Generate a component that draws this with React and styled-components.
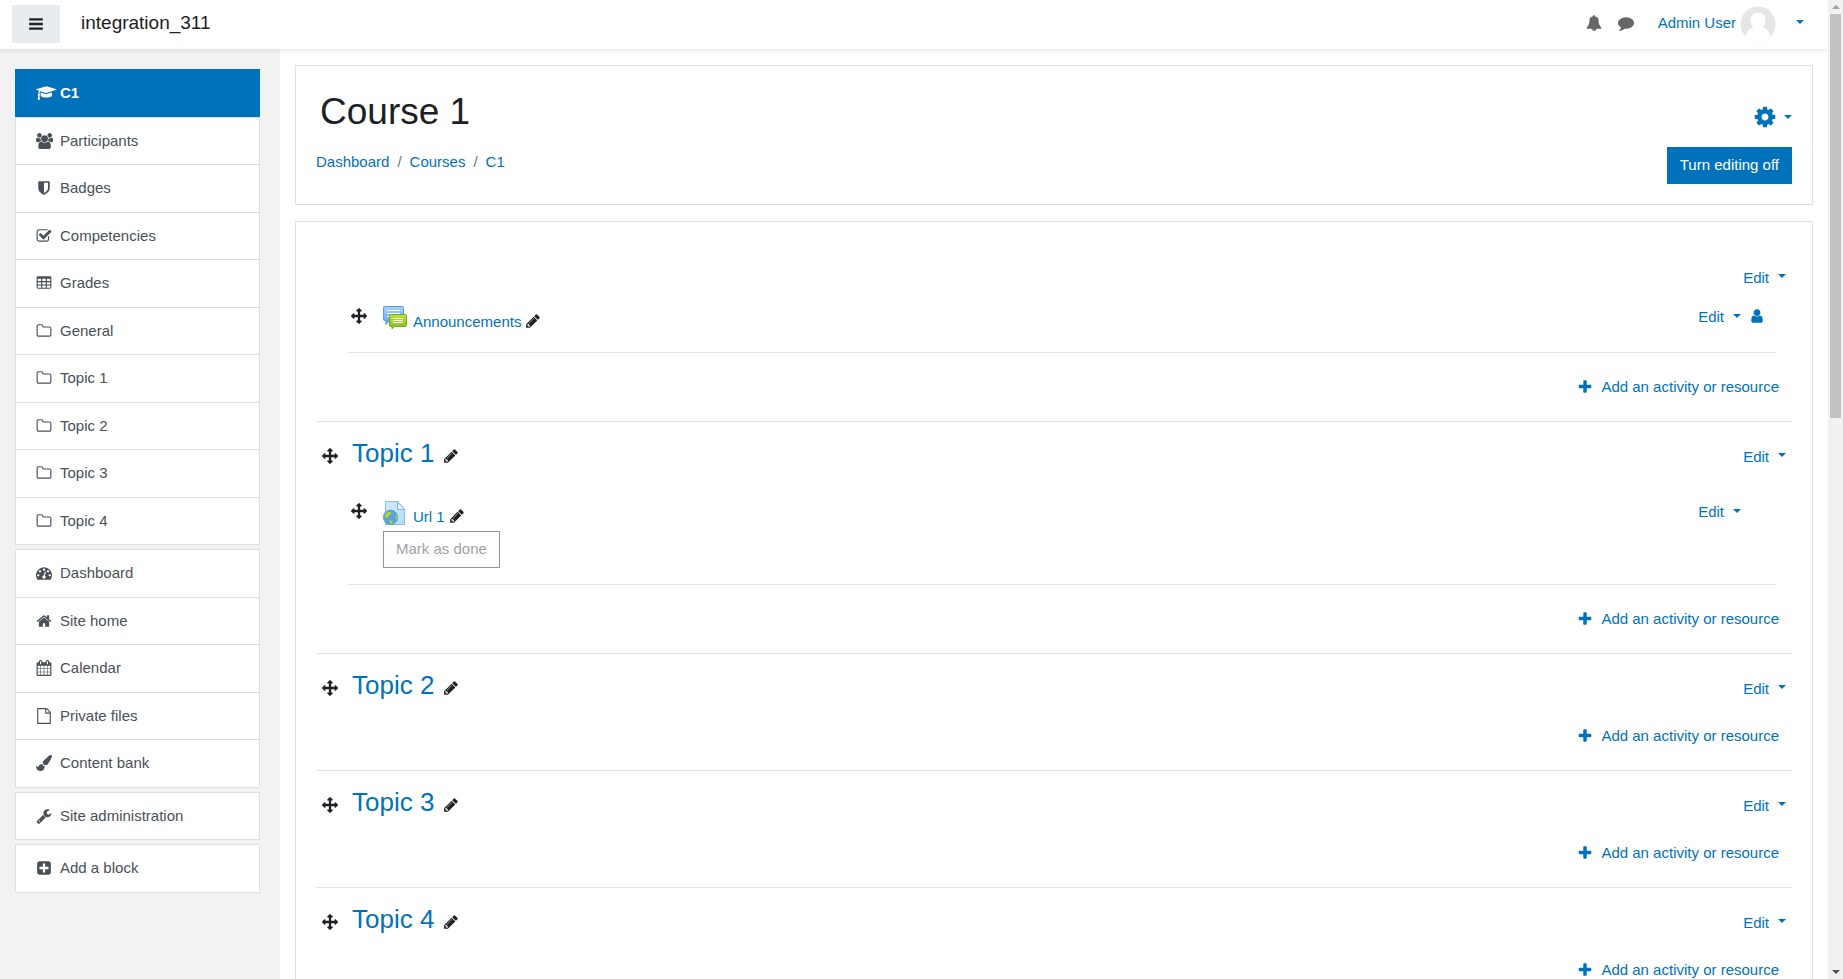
import React from "react";
import styled, { createGlobalStyle, css } from "styled-components";

const color = {
  link: "#0072bc",
  text: "#1d2125",
  muted: "#495057",
  line: "#dee2e6",
  frame: "#dfdfdf",
};

const GlobalStyle = createGlobalStyle`
  *, *::before, *::after { box-sizing: border-box; }
  body {
    margin: 0;
    font-family: "Liberation Sans", Arial, sans-serif;
    font-size: 15px;
    line-height: 22px;
    color: ${color.text};
    background: #fff;
  }
  a { color: ${color.link}; text-decoration: none; }
  button { font: inherit; cursor: pointer; }
  h1, h2, ul, ol { margin: 0; padding: 0; font-weight: 400; }
  ul, ol { list-style: none; }
`;

/* ---------- icons ---------- */

const cell = (x, y) => `M${x + 32} ${y}h320q32 0 32 32v192q0 32-32 32h-320q-32 0-32-32v-192q0-32 32-32z`;
const tableCells = [192, 704, 1216].flatMap((x) => [416, 800, 1184].map((y) => cell(x, y))).join("");

const paths = {
  bars: "M1664 1344v128q0 26-19 45t-45 19h-1408q-26 0-45-19t-19-45v-128q0-26 19-45t45-19h1408q26 0 45 19t19 45zm0-512v128q0 26-19 45t-45 19h-1408q-26 0-45-19t-19-45v-128q0-26 19-45t45-19h1408q26 0 45 19t19 45zm0-512v128q0 26-19 45t-45 19h-1408q-26 0-45-19t-19-45v-128q0-26 19-45t45-19h1408q26 0 45 19t19 45z",
  plus: "M1600 736v192q0 40-28 68t-68 28h-416v416q0 40-28 68t-68 28h-192q-40 0-68-28t-28-68v-416h-416q-40 0-68-28t-28-68v-192q0-40 28-68t68-28h416v-416q0-40 28-68t68-28h192q40 0 68 28t28 68v416h416q40 0 68 28t28 68z",
  pencil: "M491 1536l91-91-235-235-91 91v107h128v128h107zm523-928q0-22-22-22-10 0-17 7l-542 542q-7 7-7 17 0 22 22 22 10 0 17-7l542-542q7-7 7-17zm-54-192l416 416-832 832h-416v-416zm683 96q0 53-37 90l-166 166-416-416 166-165q36-38 90-38 53 0 91 38l235 234q37 39 37 91z",
  arrows: "M1792 896q0 26-19 45l-256 256q-19 19-45 19t-45-19-19-45v-128h-384v384h128q26 0 45 19t19 45-19 45l-256 256q-19 19-45 19t-45-19l-256-256q-19-19-19-45t19-45 45-19h128v-384h-384v128q0 26-19 45t-45 19-45-19l-256-256q-19-19-19-45t19-45l256-256q19-19 45-19t45 19 19 45v128h384v-384h-128q-26 0-45-19t-19-45 19-45l256-256q19-19 45-19t45 19l256 256q19 19 19 45t-19 45-45 19h-128v384h384v-128q0-26 19-45t45-19 45 19l256 256q19 19 19 45z",
  folder: "M1600 1312v-704q0-40-28-68t-68-28h-704q-40 0-68-28t-28-68v-64q0-40-28-68t-68-28h-320q-40 0-68 28t-28 68v960q0 40 28 68t68 28h1216q40 0 68-28t28-68zm128-704v704q0 92-66 158t-158 66h-1216q-92 0-158-66t-66-158v-960q0-92 66-158t158-66h320q92 0 158 66t66 158v32h672q92 0 158 66t66 158z",
  home: "M1472 992v480q0 26-19 45t-45 19h-384v-384h-256v384h-384q-26 0-45-19t-19-45v-480q0-1 .5-3t.5-3l575-474 575 474q1 2 1 6zm223-69l-62 74q-8 9-21 11h-3q-13 0-21-7l-692-577-692 577q-12 8-24 7-13-2-21-11l-62-74q-8-10-7-23.5t11-21.5l719-599q32-26 76-26t76 26l244 204v-195q0-14 9-23t23-9h192q14 0 23 9t9 23v408l219 182q10 8 11 21.5t-7 23.5z",
  user: "M1536 1399q0 109-62.5 187t-150.5 78h-854q-88 0-150.5-78t-62.5-187q0-85 8.5-160.5t31.5-152 58.5-131 94-89 134.5-34.5q131 128 313 128t313-128q76 0 134.5 34.5t94 89 58.5 131 31.5 152 8.5 160.5zm-256-887q0 159-112.5 271.5t-271.5 112.5-271.5-112.5-112.5-271.5 112.5-271.5 271.5-112.5 271.5 112.5 112.5 271.5z",
  cog: "M1152 896q0-106-75-181t-181-75-181 75-75 181 75 181 181 75 181-75 75-181zm512-109v222q0 12-8 23t-20 13l-185 28q-19 54-39 91 35 50 107 138 10 12 10 25t-9 23q-27 37-99 108t-94 71q-12 0-26-9l-138-108q-44 23-91 38-16 136-29 186-7 28-36 28h-222q-14 0-24.5-8.5t-11.5-21.5l-28-184q-49-16-90-37l-141 107q-10 9-25 9-14 0-25-11-126-114-165-168-7-10-7-23 0-12 8-23 15-21 51-66.5t54-70.5q-27-50-41-99l-183-27q-13-2-21-12.5t-8-23.5v-222q0-12 8-23t19-13l186-28q14-46 39-92-40-57-107-138-10-12-10-24 0-10 9-23 26-36 98.5-107.5t94.5-71.5q13 0 26 10l138 107q44-23 91-38 16-136 29-186 7-28 36-28h222q14 0 24.5 8.5t11.5 21.5l28 184q49 16 90 37l142-107q9-9 24-9 13 0 25 10 129 119 165 170 7 8 7 22 0 12-8 23-15 21-51 66.5t-54 70.5q26 50 41 98l183 28q13 2 21 12.5t8 23.5z",
  plusSquare: "M1408 960v-128q0-26-19-45t-45-19h-320v-320q0-26-19-45t-45-19h-128q-26 0-45 19t-19 45v320h-320q-26 0-45 19t-19 45v128q0 26 19 45t45 19h320v320q0 26 19 45t45 19h128q26 0 45-19t19-45v-320h320q26 0 45-19t19-45zm256-544v960q0 119-84.5 203.5t-203.5 84.5h-960q-119 0-203.5-84.5t-84.5-203.5v-960q0-119 84.5-203.5t203.5-84.5h960q119 0 203.5 84.5t84.5 203.5z",
  wrench: "M448 1472q0-26-19-45t-45-19-45 19-19 45 19 45 45 19 45-19 19-45zm644-420l-682 682q-37 37-90 37-52 0-91-37l-106-108q-38-36-38-90 0-53 38-91l681-681q39 98 114.5 173.5t173.5 114.5zm634-435q0 39-23 106-47 134-164.5 217.5t-258.5 83.5q-185 0-316.5-131.5t-131.5-316.5 131.5-316.5 316.5-131.5q58 0 121.5 16.5t107.5 46.5q16 11 16 28t-16 28l-293 169v224l193 107q5-3 79-48.5t135.5-81 70.5-35.5q15 0 23.5 10t8.5 25z",
  brush: "M1615 0q70 0 122.5 46.5t52.5 116.5q0 63-45 151-332 629-465 752-97 91-218 91-126 0-216.5-92.5t-90.5-219.5q0-128 92-212l638-579q59-54 130-54zm-909 1034q39 76 106.5 130t150.5 76l1 71q4 213-129.5 347t-348.5 134q-123 0-218-46.5t-152.5-127.5-86.5-183-29-220q7 5 41 30t62 44.5 59 36.5 46 17q41 0 55-37 25-66 57.5-112.5t69.5-76 88-47.5 103-25.5 125-10.5z",
  file: "M1596 380q28 28 48 76t20 88v1152q0 40-28 68t-68 28h-1344q-40 0-68-28t-28-68v-1600q0-40 28-68t68-28h896q40 0 88 20t76 48zm-444-244v376h376q-10-29-22-41l-313-313q-12-12-41-22zm384 1528v-1024h-416q-40 0-68-28t-28-68v-416h-768v1536h1280z",
  calendar: "M192 1664h288v-288h-288v288zm352 0h320v-288h-320v288zm-352-352h288v-320h-288v320zm352 0h320v-320h-320v320zm-352-384h288v-288h-288v288zm736 736h320v-288h-320v288zm-384-736h320v-288h-320v288zm768 736h288v-288h-288v288zm-384-352h320v-320h-320v320zm-352-864v-288q0-13-9.5-22.5t-22.5-9.5h-64q-13 0-22.5 9.5t-9.5 22.5v288q0 13 9.5 22.5t22.5 9.5h64q13 0 22.5-9.5t9.5-22.5zm736 864h288v-320h-288v320zm-384-384h320v-288h-320v288zm384 0h288v-288h-288v288zm32-480v-288q0-13-9.5-22.5t-22.5-9.5h-64q-13 0-22.5 9.5t-9.5 22.5v288q0 13 9.5 22.5t22.5 9.5h64q13 0 22.5-9.5t9.5-22.5zm384-64v1280q0 52-38 90t-90 38h-1408q-52 0-90-38t-38-90v-1280q0-52 38-90t90-38h128v-96q0-66 47-113t113-47h64q66 0 113 47t47 113v96h384v-96q0-66 47-113t113-47h64q66 0 113 47t47 113v96h128q52 0 90 38t38 90z",
  table: "M1728 288v1088q0 66-47 113t-113 47h-1344q-66 0-113-47t-47-113v-1088q0-66 47-113t113-47h1344q66 0 113 47t47 113z" + tableCells,
  check: "M1472 930v318q0 119-84.5 203.5t-203.5 84.5h-832q-119 0-203.5-84.5t-84.5-203.5v-832q0-119 84.5-203.5t203.5-84.5h832q63 0 117 25 15 7 18 23 3 17-9 29l-49 49q-10 10-23 10-3 0-9-2-23-6-45-6h-832q-66 0-113 47t-47 113v832q0 66 47 113t113 47h832q66 0 113-47t47-113v-254q0-13 9-22l64-64q10-10 23-10 6 0 12 3 20 8 20 29zm231-489l-814 814q-24 24-57 24t-57-24l-430-430q-24-24-24-57t24-57l110-110q24-24 57-24t57 24l263 263 647-647q24-24 57-24t57 24l110 110q24 24 24 57t-24 57z",
  shield: "M1344 960v-640h-448v1137q119-63 213-137 235-184 235-360zm192-768v768q0 86-33.5 170.5t-83 150-118 127.5-126.5 103-121 77.5-89.5 49.5-42.5 20q-12 6-26 6t-26-6q-16-7-42.5-20t-89.5-49.5-121-77.5-126.5-103-118-127.5-83-150-33.5-170.5v-768q0-26 19-45t45-19h1152q26 0 45 19t19 45z",
  users: "M593 896q-162 5-265 128h-134q-82 0-138-40.5t-56-118.5q0-353 124-353 6 0 43.5 21t97.5 42.5 119 21.5q67 0 133-23-5 37-5 66 0 139 81 256zm1071 637q0 120-73 189.5t-194 69.5h-874q-121 0-194-69.5t-73-189.5q0-53 3.5-103.5t14-109 26.5-108.5 43-97.5 62-81 85.5-53.5 111.5-20q10 0 43 21.5t73 48 107 48 135 21.5 135-21.5 107-48 73-48 43-21.5q61 0 111.5 20t85.5 53.5 62 81 43 97.5 26.5 108.5 14 109 3.5 103.5zm-1024-1277q0 106-75 181t-181 75-181-75-75-181 75-181 181-75 181 75 75 181zm704 384q0 159-112.5 271.5t-271.5 112.5-271.5-112.5-112.5-271.5 112.5-271.5 271.5-112.5 271.5 112.5 112.5 271.5zm576 225q0 78-56 118.5t-138 40.5h-134q-103-123-265-128 81-117 81-256 0-29-5-66 66 23 133 23 59 0 119-21.5t97.5-42.5 43.5-21q124 0 124 353zm-128-609q0 106-75 181t-181 75-181-75-75-181 75-181 181-75 181 75 75 181z",
  gauge: "M384 1152q0-53-37.5-90.5t-90.5-37.5-90.5 37.5-37.5 90.5 37.5 90.5 90.5 37.5 90.5-37.5 37.5-90.5zm192-448q0-53-37.5-90.5t-90.5-37.5-90.5 37.5-37.5 90.5 37.5 90.5 90.5 37.5 90.5-37.5 37.5-90.5zm428 481l101-382q6-26-7.5-48.5t-38.5-29.5-48 6.5-30 39.5l-101 382q-60 5-107 43.5t-63 98.5q-20 77 20 146t117 89 146-20 89-117q16-60-6-117t-72-91zm660-33q0-53-37.5-90.5t-90.5-37.5-90.5 37.5-37.5 90.5 37.5 90.5 90.5 37.5 90.5-37.5 37.5-90.5zm-640-640q0-53-37.5-90.5t-90.5-37.5-90.5 37.5-37.5 90.5 37.5 90.5 90.5 37.5 90.5-37.5 37.5-90.5zm448 192q0-53-37.5-90.5t-90.5-37.5-90.5 37.5-37.5 90.5 37.5 90.5 90.5 37.5 90.5-37.5 37.5-90.5zm320 448q0 261-141 483-19 29-54 29h-1402q-35 0-54-29-141-221-141-483 0-182 71-348t191-286 286-191 348-71 348 71 286 191 191 286 71 348z",
  cap: "M1774 836l18 316q4 69-82 128t-235 93.5-323 34.5-323-34.5-235-93.5-82-128l18-316 574 181q22 7 48 7t48-7zm530-324q0 23-22 31l-1120 352q-4 1-10 1t-10-1l-652-206q-43 34-71 111.5t-34 178.5q63 36 63 109 0 69-58 107l58 433q2 14-8 25-9 11-24 11h-192q-15 0-24-11-10-11-8-25l58-433q-58-38-58-107 0-73 65-111 11-207 98-330l-333-104q-22-8-22-31t22-31l1120-352q4-1 10-1t10 1l1120 352q22 8 22 31z",
  bell: "M912 1696q0-16-16-16-59 0-101.5-42.5t-42.5-101.5q0-16-16-16t-16 16q0 73 51.5 124.5t124.5 51.5q16 0 16-16zm816-288q0 52-38 90t-90 38h-448q0 106-75 181t-181 75-181-75-75-181h-448q-52 0-90-38t-38-90q50-42 91-88t85-119.5 74.5-158.5 50-206 19.5-260q0-152 117-282.5t307-158.5q-8-19-8-39 0-40 28-68t68-28 68 28 28 68q0 20-8 39 190 28 307 158.5t117 282.5q0 139 19.5 260t50 206 74.5 158.5 85 119.5 91 88z",
  comment: "M1792 896q0 174-120 321.5t-326 233-450 85.5q-70 0-145-8-198 175-460 242-49 14-114 22-17 2-30.5-9t-17.5-29v-1q-3-4-.5-12t2-10 4.5-9.5l6-9 7-8.5 8-9q7-8 31-34.5t34.5-38 31-39.5 32.5-51 27-59 26-76q-157-89-247.5-220t-90.5-281q0-130 71-248.5t191-204.5 286-136.5 348-50.5 348 50.5 286 136.5 191 204.5 71 248.5z",
};

const Glyph = styled.svg`
  display: block;
  flex: none;
  width: ${(p) => p.$size}px;
  height: ${(p) => p.$size}px;
  overflow: visible;
  fill: currentColor;
`;

const Icon = ({ name, size = 16 }) => (
  <Glyph $size={size} viewBox="0 0 1792 1792" aria-hidden="true">
    <path fillRule={name === "table" ? "evenodd" : "nonzero"} d={paths[name]} />
  </Glyph>
);

const ForumIcon = () => (
  <Glyph $size={24} viewBox="0 0 24 24" aria-hidden="true">
    <defs>
      <linearGradient id="forumBlue" x1="0" y1="0" x2="0" y2="1">
        <stop offset="0" stopColor="#a9d3fa" />
        <stop offset="1" stopColor="#5fa0e6" />
      </linearGradient>
      <linearGradient id="forumGreen" x1="0" y1="0" x2="0" y2="1">
        <stop offset="0" stopColor="#b9e33c" />
        <stop offset="1" stopColor="#86bd1c" />
      </linearGradient>
    </defs>
    <path d="M1.5.5h18q1 0 1 1v12q0 1-1 1H6.500l-3.500 4v-4H1.500q-1 0-1-1v-12q0-1 1-1z" fill="url(#forumBlue)" stroke="#5b9bdf" />
    <path d="M4 4.500h13M4 7.500h13M4 10.500h4" stroke="#fff" />
    <path d="M7.500 8.500h15q1 0 1 1v10q0 1-1 1H11.500l-2.500 2.500v-2.500H7.500q-1 0-1-1v-10q0-1 1-1z" fill="url(#forumGreen)" stroke="#79a81c" />
    <path d="M10 12.500h10M10 14.500h10M10 16.500h10" stroke="#fff" />
  </Glyph>
);

const UrlIcon = () => (
  <Glyph $size={24} viewBox="0 0 24 24" aria-hidden="true">
    <defs>
      <linearGradient id="sheet" x1="0" y1="0" x2="1" y2="1">
        <stop offset="0" stopColor="#d3eafc" />
        <stop offset="1" stopColor="#b3def8" />
      </linearGradient>
    </defs>
    <path d="M2.500.500h12l7 8v15h-19z" fill="url(#sheet)" stroke="#83bff0" />
    <path d="M14.500.500v8h7z" fill="#e4f3fe" stroke="#7cb5ee" />
    <circle cx="7.500" cy="16.300" r="7.200" fill="#5f9fe2" stroke="#4f8ed6" strokeWidth=".6" />
    <path d="M1.800 16q-.3-3.500 3-5l3.700.2-.7 2-2 1.200-.6 2-1.800.8zM6.300 19.300l3 .2.700 1.800-2.200 2-1.200-2zM12.500 13.500l1.700 1.200v3.300l-1.600-.6zM8.400 11.500l1.600.3-.6 1.200z" fill="#a7d92f" />
  </Glyph>
);

const AvatarIcon = () => (
  <Glyph $size={36} viewBox="0 0 36 36" aria-hidden="true">
    <defs>
      <clipPath id="avatarClip"><circle cx="18" cy="18" r="17.500" /></clipPath>
    </defs>
    <g clipPath="url(#avatarClip)">
      <rect width="36" height="36" fill="#e6e6e6" />
      <ellipse cx="18" cy="14.500" rx="7.600" ry="8" fill="#fff" />
      <path d="M5 33q1.500-8.500 7-11.500h12q5.500 3 7 11.500v3H5z" fill="#fff" />
    </g>
  </Glyph>
);

/* ---------- page frame ---------- */

const Shell = styled.div`
  display: flex;
  height: 100vh;
  overflow: hidden;
`;

const Page = styled.div`
  flex: 1;
  min-width: 0;
  display: flex;
  flex-direction: column;
  overflow: hidden;
`;

const Navbar = styled.header`
  position: relative;
  z-index: 1;
  flex: none;
  display: flex;
  align-items: center;
  justify-content: space-between;
  height: 49px;
  padding: 0 24px 1px 12px;
  background: #fff;
  box-shadow: 0 2px 4px rgba(0, 0, 0, 0.08);
`;

const NavGroup = styled.div`
  display: flex;
  align-items: center;
  gap: ${(p) => p.$gap}px;
`;

const MenuButton = styled.button`
  display: grid;
  place-items: center;
  width: 48px;
  height: 38px;
  padding: 0;
  border: 0;
  background: #e9ecef;
  color: ${color.text};
`;

const Brand = styled.a`
  padding-bottom: 2px;
  font-size: 19px;
  color: ${color.text};
`;

const ToolButton = styled.button`
  display: grid;
  place-items: center;
  width: 16px;
  height: 32px;
  padding: 0 0 2px;
  border: 0;
  background: none;
  color: #666;
`;

const UserLink = styled.a`
  display: flex;
  align-items: center;
  gap: 4px;
  margin-left: 8px;
  padding-right: 4px;
`;

const UserName = styled.span`
  padding-bottom: 2px;
`;

const Caret = styled.span`
  display: inline-block;
  width: 0;
  height: 0;
  border: 4px solid transparent;
  border-top-color: currentColor;
  border-bottom-width: 0;
`;

const CaretButton = styled.button`
  display: flex;
  align-items: center;
  padding: 0 0 4px;
  border: 0;
  background: none;
  color: ${color.link};
`;

const Columns = styled.div`
  flex: 1;
  min-height: 0;
  display: flex;
`;

const Sidebar = styled.nav`
  flex: none;
  display: flex;
  flex-direction: column;
  gap: 4px;
  width: 280px;
  padding: 20px 20px 0 15px;
  background: #f2f2f2;
`;

const NavList = styled.ul`
  border: 1px solid ${color.frame};
  background: #fff;
`;

const NavEntry = styled.li`
  & + & { border-top: 1px solid ${color.frame}; }
`;

const NavLink = styled.a`
  display: flex;
  align-items: center;
  gap: 8px;
  padding: 12px 20px;
  line-height: 1.5;
  color: ${color.muted};
  ${(p) =>
    p.$active &&
    css`
      margin: -1px -1px 0;
      padding: 13px 21px 12px;
      background: ${color.link};
      color: #fff;
      font-weight: 700;
    `}
`;

const Main = styled.main`
  flex: 1;
  min-width: 0;
  display: flex;
  flex-direction: column;
  gap: 16px;
  padding: 16px 15px 0;
`;

const Card = styled.section`
  flex: none;
  padding: ${(p) => (p.$header ? 20 : 21)}px 20px 20px;
  border: 1px solid ${color.frame};
  background: #fff;
`;

/* ---------- course header ---------- */

const HeaderRow = styled.div`
  display: flex;
  justify-content: space-between;
`;

const Heading = styled.div`
  display: flex;
  flex-direction: column;
  gap: 16px;
  padding-top: 3px;
`;

const Title = styled.h1`
  padding-left: 4px;
  font-size: 37px;
  line-height: 46px;
`;

const Crumbs = styled.ol`
  display: flex;
`;

const Crumb = styled.li`
  & + &::before {
    content: "/";
    padding: 0 8px;
    color: #6c757d;
  }
`;

const HeaderTools = styled.div`
  display: flex;
  flex-direction: column;
  align-items: flex-end;
  gap: 18px;
  padding-top: 19px;
`;

const GearButton = styled.button`
  display: flex;
  align-items: center;
  gap: 7px;
  height: 24px;
  padding: 0;
  border: 0;
  background: none;
  color: ${color.link};
`;

const PrimaryButton = styled.button`
  height: 37px;
  padding: 0 13px 2px;
  border: 0;
  background: ${color.link};
  color: #fff;
`;

/* ---------- course topics ---------- */

const Topic = styled.li`
  display: flex;
  flex-direction: column;
  padding: 16px 0 23px;
  border-bottom: 1px solid ${color.line};
`;

const TopicHeader = styled.div`
  display: flex;
  align-items: flex-end;
  min-height: 30px;
  padding-right: 6px;
`;

const MoveButton = styled.button`
  display: grid;
  place-items: center;
  flex: none;
  width: ${(p) => (p.$small ? 22 : 28)}px;
  height: ${(p) => (p.$small ? 20 : 24)}px;
  padding: 0;
  border: 0;
  background: none;
  color: ${color.text};
`;

const TopicTitle = styled.h2`
  margin: 0 9px 0 8px;
  font-size: 26px;
  line-height: 30px;
`;

const PencilButton = styled.button`
  display: grid;
  place-items: center;
  width: 16px;
  height: 24px;
  padding: 0;
  border: 0;
  background: none;
  color: ${color.text};
`;

const EditLink = styled.a`
  margin-left: auto;
  ${Caret} {
    margin-left: 9px;
    vertical-align: ${(p) => (p.$topic ? 5 : 4)}px;
  }
`;

const Content = styled.div`
  display: flex;
  flex-direction: column;
  padding-top: ${(p) => (p.$flush ? 0 : 16)}px;
`;

const Activities = styled.ul`
  margin: 0 16px 14px 32px;
`;

const Activity = styled.li`
  display: flex;
  align-items: flex-start;
  padding: 17px 11px 16px 0;
  border-bottom: 1px solid ${color.line};
`;

const ActivityBody = styled.div`
  margin-left: 13px;
`;

const ActivityName = styled.div`
  display: flex;
  align-items: center;
  gap: 4px;
  height: 30px;
`;

const ActivityLink = styled.a`
  display: flex;
  align-items: flex-start;
  gap: 6px;
  height: 30px;
  line-height: 32px;
`;

const RoleSlot = styled.span`
  width: 16px;
  height: 20px;
  margin-left: 8px;
  display: grid;
  place-items: center;
  color: ${color.link};
`;

const DoneButton = styled.button`
  height: 37px;
  padding: 0 12px 2px;
  border: 1px solid #8f959e;
  background: #fff;
  color: #9ea3a9;
`;

const AddLink = styled.a`
  display: flex;
  align-items: center;
  align-self: flex-end;
  gap: 8px;
  margin: 9px 13px 0 0;
`;

/* ---------- scroll bar ---------- */

const ScrollBar = styled.div`
  flex: none;
  display: flex;
  flex-direction: column;
  width: 15px;
  background: #f1f1f1;
`;

const ScrollArrow = styled.div`
  display: grid;
  place-items: center;
  height: 14px;
  color: ${(p) => (p.$up ? "#a3a3a3" : "#505050")};
  ${Caret} { transform: ${(p) => (p.$up ? "rotate(180deg)" : "none")}; }
`;

const ScrollTrack = styled.div`
  flex: 1;
  padding: 0 2px;
`;

const ScrollThumb = styled.div`
  height: 42.5%;
  background: #c1c1c1;
`;

/* ---------- data ---------- */

const navGroups = [
  [
    ["cap", "C1", true],
    ["users", "Participants"],
    ["shield", "Badges"],
    ["check", "Competencies"],
    ["table", "Grades"],
    ["folder", "General"],
    ["folder", "Topic 1"],
    ["folder", "Topic 2"],
    ["folder", "Topic 3"],
    ["folder", "Topic 4"],
  ],
  [
    ["gauge", "Dashboard"],
    ["home", "Site home"],
    ["calendar", "Calendar"],
    ["file", "Private files"],
    ["brush", "Content bank"],
  ],
  [["wrench", "Site administration"]],
  [["plusSquare", "Add a block"]],
];

const topics = [
  { activities: [{ name: "Announcements", Picture: ForumIcon, role: true }] },
  { title: "Topic 1", activities: [{ name: "Url 1", Picture: UrlIcon, completion: true }] },
  { title: "Topic 2", activities: [] },
  { title: "Topic 3", activities: [] },
  { title: "Topic 4", activities: [] },
];

const ActivityRow = ({ name, Picture, role, completion }) => (
  <Activity>
    <MoveButton $small aria-label={`Move ${name}`}><Icon name="arrows" /></MoveButton>
    <ActivityBody>
      <ActivityName>
        <ActivityLink href="#activity"><Picture />{name}</ActivityLink>
        <PencilButton aria-label={`Rename ${name}`}><Icon name="pencil" /></PencilButton>
      </ActivityName>
      {completion && <DoneButton>Mark as done</DoneButton>}
    </ActivityBody>
    <EditLink href="#edit">Edit<Caret /></EditLink>
    <RoleSlot>{role && <Icon name="user" />}</RoleSlot>
  </Activity>
);

export default function App() {
  return (
    <>
      <GlobalStyle />
      <Shell>
        <Page>
          <Navbar>
            <NavGroup $gap={21}>
              <MenuButton aria-label="Side panel"><Icon name="bars" /></MenuButton>
              <Brand href="#home">integration_311</Brand>
            </NavGroup>
            <NavGroup $gap={16}>
              <ToolButton aria-label="Notifications"><Icon name="bell" /></ToolButton>
              <ToolButton aria-label="Messages"><Icon name="comment" /></ToolButton>
              <UserLink href="#profile"><UserName>Admin User</UserName><AvatarIcon /></UserLink>
              <CaretButton aria-label="User menu"><Caret /></CaretButton>
            </NavGroup>
          </Navbar>
          <Columns>
            <Sidebar aria-label="Course">
              {navGroups.map((group, i) => (
                <NavList key={i}>
                  {group.map(([icon, label, active]) => (
                    <NavEntry key={label}>
                      <NavLink href="#nav" $active={active}><Icon name={icon} />{label}</NavLink>
                    </NavEntry>
                  ))}
                </NavList>
              ))}
            </Sidebar>
            <Main>
              <Card $header>
                <HeaderRow>
                  <Heading>
                    <Title>Course 1</Title>
                    <Crumbs>
                      {["Dashboard", "Courses", "C1"].map((c) => (
                        <Crumb key={c}><a href="#crumb">{c}</a></Crumb>
                      ))}
                    </Crumbs>
                  </Heading>
                  <HeaderTools>
                    <GearButton aria-label="Course settings"><Icon name="cog" size={24} /><Caret /></GearButton>
                    <PrimaryButton>Turn editing off</PrimaryButton>
                  </HeaderTools>
                </HeaderRow>
              </Card>
              <Card>
                <ul>
                  {topics.map(({ title, activities }, i) => (
                    <Topic key={i}>
                      <TopicHeader>
                        {title && (
                          <>
                            <MoveButton aria-label={`Move ${title}`}><Icon name="arrows" /></MoveButton>
                            <TopicTitle><a href="#topic">{title}</a></TopicTitle>
                            <PencilButton aria-label={`Rename ${title}`}><Icon name="pencil" /></PencilButton>
                          </>
                        )}
                        <EditLink $topic href="#edit">Edit<Caret /></EditLink>
                      </TopicHeader>
                      <Content $flush={!title}>
                        {activities.length > 0 && (
                          <Activities>
                            {activities.map((a) => <ActivityRow key={a.name} {...a} />)}
                          </Activities>
                        )}
                        <AddLink href="#add"><Icon name="plus" />Add an activity or resource</AddLink>
                      </Content>
                    </Topic>
                  ))}
                </ul>
              </Card>
            </Main>
          </Columns>
        </Page>
        <ScrollBar aria-hidden="true">
          <ScrollArrow $up><Caret /></ScrollArrow>
          <ScrollTrack><ScrollThumb /></ScrollTrack>
          <ScrollArrow><Caret /></ScrollArrow>
        </ScrollBar>
      </Shell>
    </>
  );
}
